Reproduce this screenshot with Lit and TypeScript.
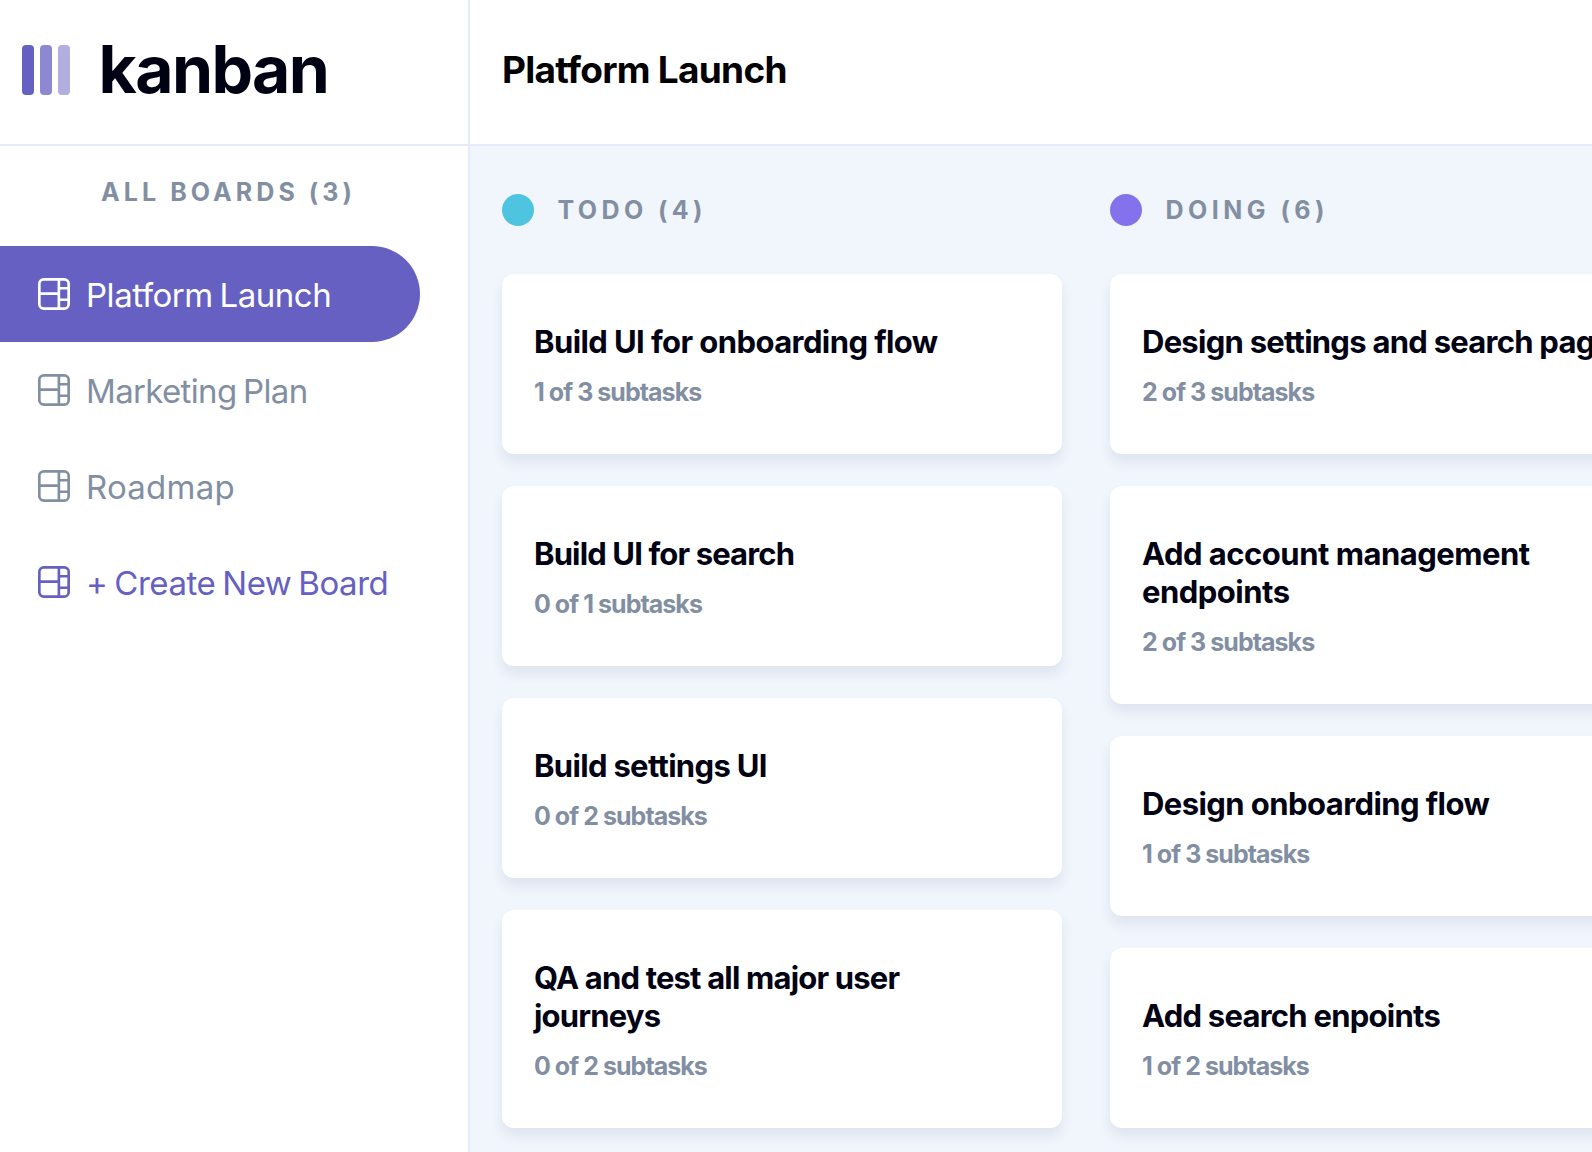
import { LitElement, html, css, svg } from "lit";
import { customElement, property } from "lit/decorators.js";
import { classMap } from "lit/directives/class-map.js";
import { styleMap } from "lit/directives/style-map.js";

interface Board {
  name: string;
  tracking: number;
  kind?: "active" | "create";
}

interface Task {
  title: string;
  done: number;
  total: number;
  tracking: number;
}

interface Column {
  name: string;
  count: number;
  color: string;
  tracking: number;
  tasks: Task[];
}

const boards: Board[] = [
  { name: "Platform Launch", tracking: -0.47, kind: "active" },
  { name: "Marketing Plan", tracking: -0.66 },
  { name: "Roadmap", tracking: 0.23 },
  { name: "+ Create New Board", tracking: -0.44, kind: "create" },
];

const columns: Column[] = [
  {
    name: "TODO",
    count: 4,
    color: "#4fc4e1",
    tracking: 4.4,
    tasks: [
      { title: "Build UI for onboarding flow", done: 1, total: 3, tracking: -0.58 },
      { title: "Build UI for search", done: 0, total: 1, tracking: -0.86 },
      { title: "Build settings UI", done: 0, total: 2, tracking: -0.68 },
      { title: "QA and test all major user journeys", done: 0, total: 2, tracking: -0.82 },
    ],
  },
  {
    name: "DOING",
    count: 6,
    color: "#8472ec",
    tracking: 4.47,
    tasks: [
      { title: "Design settings and search pages", done: 2, total: 3, tracking: -0.74 },
      { title: "Add account management endpoints", done: 2, total: 3, tracking: -0.5 },
      { title: "Design onboarding flow", done: 1, total: 3, tracking: -0.57 },
      { title: "Add search enpoints", done: 1, total: 2, tracking: -0.75 },
    ],
  },
];

const spacing = (px: number) => styleMap({ letterSpacing: `${px}px` });

const boardIcon = html`<svg width="32" height="32" viewBox="0 0 16 16" fill="currentColor" aria-hidden="true">
  ${svg`<path d="M0 2.889A2.889 2.889 0 0 1 2.889 0H13.11A2.889 2.889 0 0 1 16 2.889V13.11A2.888 2.888 0 0 1 13.111 16H2.89A2.889 2.889 0 0 1 0 13.111V2.89Zm1.333 5.555v4.667c0 .859.697 1.556 1.556 1.556h6.889V8.444H1.333Zm8.445-1.333V1.333h-6.89A1.556 1.556 0 0 0 1.334 2.89V7.11h8.445Zm4.889-1.333H11.11v4.444h3.556V5.778Zm0 5.778H11.11v3.11h2a1.556 1.556 0 0 0 1.556-1.555v-1.555Zm0-7.112V2.89a1.555 1.555 0 0 0-1.556-1.556h-2v3.111h3.556Z"/>`}
</svg>`;

@customElement("task-card")
class TaskCard extends LitElement {
  @property({ attribute: false }) task!: Task;

  static styles = css`
    :host {
      display: block;
      box-sizing: border-box;
      padding: 49px 32px 47px;
      border-radius: 12px;
      background: #fff;
      box-shadow: 0 8px 12px rgba(54, 86, 126, 0.1);
    }
    .title {
      margin: 0 0 16px;
      font-size: 31px;
      font-weight: 700;
      line-height: 38px;
      color: #000112;
    }
    .subtasks {
      margin: 0;
      font-size: 25px;
      font-weight: 700;
      line-height: 30px;
      letter-spacing: -0.96px;
      color: #828fa3;
    }
  `;

  render() {
    const { title, done, total, tracking } = this.task;
    return html`
      <h3 class="title" style=${spacing(tracking)}>${title}</h3>
      <p class="subtasks">${done} of ${total} subtasks</p>
    `;
  }
}

@customElement("board-column")
class BoardColumn extends LitElement {
  @property({ attribute: false }) column!: Column;

  static styles = css`
    :host {
      display: flex;
      flex-direction: column;
      flex: none;
      gap: 48px;
      width: 560px;
    }
    .head {
      display: flex;
      align-items: center;
      gap: 23.5px;
      height: 32px;
    }
    .dot {
      width: 32px;
      height: 32px;
      border-radius: 50%;
    }
    .label {
      margin: 0;
      font-size: 25px;
      font-weight: 700;
      line-height: 30px;
      color: #828fa3;
    }
    .cards {
      display: flex;
      flex-direction: column;
      gap: 32px;
    }
  `;

  render() {
    const { name, count, color, tracking, tasks } = this.column;
    return html`
      <div class="head">
        <span class="dot" style=${styleMap({ background: color })}></span>
        <h2 class="label" style=${spacing(tracking)}>${name} (${count})</h2>
      </div>
      <div class="cards">${tasks.map((t) => html`<task-card .task=${t}></task-card>`)}</div>
    `;
  }
}

@customElement("app-root")
class AppRoot extends LitElement {
  static styles = css`
    :host {
      display: grid;
      grid-template-columns: 470px minmax(0, 1fr);
      height: 100vh;
      overflow: hidden;
      background: #fff;
      font-family: Inter, "Liberation Sans", sans-serif;
    }
    .sidebar {
      border-right: 2px solid #e5ebfa;
    }
    .brand {
      display: flex;
      align-items: flex-start;
      gap: 28.5px;
      box-sizing: border-box;
      height: 146px;
      padding: 30px 0 0 22px;
      border-bottom: 2px solid #e5ebfa;
    }
    .mark {
      display: block;
      margin-top: 15px;
      fill: #6560c2;
    }
    .wordmark {
      font-size: 66px;
      font-weight: 700;
      line-height: 78px;
      letter-spacing: -1.6px;
      color: #000112;
    }
    .heading {
      margin: 31px 0 39px 101px;
      font-size: 25px;
      font-weight: 700;
      line-height: 30px;
      letter-spacing: 4.07px;
      color: #828fa3;
    }
    .item {
      display: flex;
      align-items: center;
      gap: 16px;
      box-sizing: border-box;
      width: 420px;
      height: 96px;
      padding-left: 38px;
      color: #828fa3;
    }
    .item.active {
      border-radius: 0 48px 48px 0;
      background: #6560c2;
      color: #fff;
    }
    .item.create {
      color: #6560c2;
    }
    .name {
      padding-top: 2px;
      font-size: 33px;
      font-weight: 400;
      line-height: 40px;
      word-spacing: -2px;
      white-space: nowrap;
    }
    .main {
      display: flex;
      flex-direction: column;
      min-width: 0;
      min-height: 0;
    }
    .topbar {
      display: flex;
      align-items: center;
      box-sizing: border-box;
      flex: none;
      height: 146px;
      padding: 0 32px 5px;
      border-bottom: 2px solid #e5ebfa;
    }
    .title {
      margin: 0;
      font-size: 37px;
      font-weight: 700;
      line-height: 45px;
      letter-spacing: -0.72px;
      color: #000;
    }
    .board {
      display: flex;
      gap: 48px;
      flex: 1;
      min-height: 0;
      padding: 48px 32px 0;
      overflow: hidden;
      background: #f1f5fc;
    }
  `;

  render() {
    return html`
      <aside class="sidebar">
        <div class="brand">
          <svg class="mark" width="48" height="50" viewBox="0 0 48 50" aria-hidden="true">
            <rect width="12" height="50" rx="4" />
            <rect x="18" width="12" height="50" rx="4" opacity="0.75" />
            <rect x="36" width="12" height="50" rx="4" opacity="0.5" />
          </svg>
          <span class="wordmark">kanban</span>
        </div>
        <h2 class="heading">ALL BOARDS (3)</h2>
        <nav>
          ${boards.map(
            (b) => html`<div
              class=${classMap({ item: true, active: b.kind === "active", create: b.kind === "create" })}
            >
              ${boardIcon}<span class="name" style=${spacing(b.tracking)}>${b.name}</span>
            </div>`
          )}
        </nav>
      </aside>
      <main class="main">
        <header class="topbar"><h1 class="title">Platform Launch</h1></header>
        <section class="board">
          ${columns.map((c) => html`<board-column .column=${c}></board-column>`)}
        </section>
      </main>
    `;
  }
}
